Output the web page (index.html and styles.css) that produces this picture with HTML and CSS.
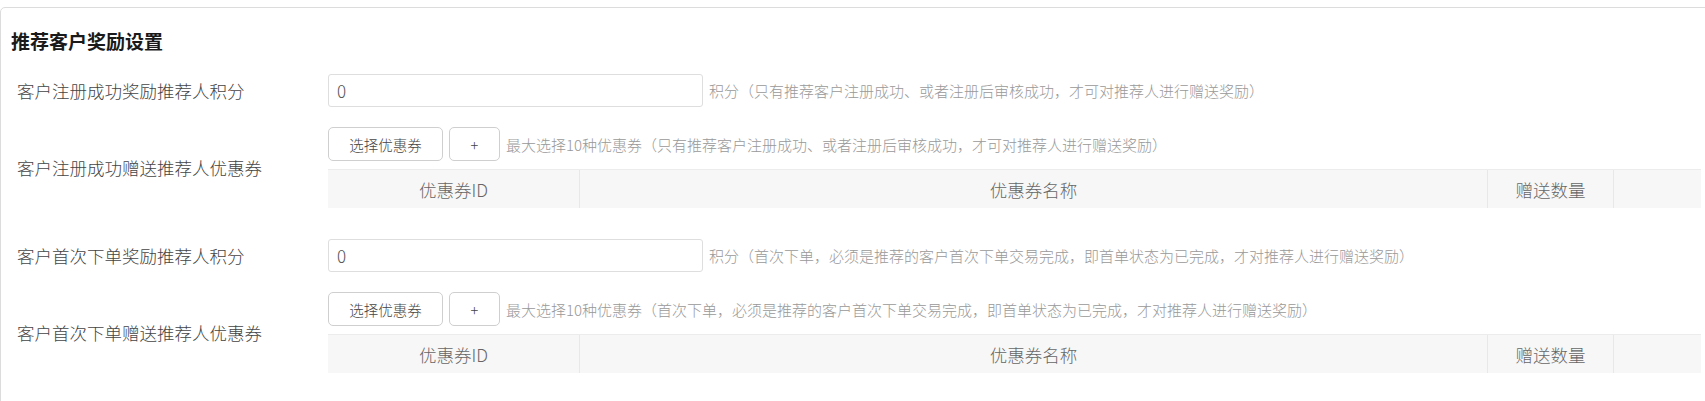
FILE: index.html
```html
<!DOCTYPE html>
<html lang="zh-CN">
<head>
    <meta charset="UTF-8">
    <title>推荐客户奖励设置</title>
    <link rel="stylesheet" href="styles.css">
</head>
<body>
    <div class="panel">
        <h3 class="panel-title">推荐客户奖励设置</h3>

        <div class="form-row">
            <label class="form-label">客户注册成功奖励推荐人积分</label>
            <div class="form-field inline">
                <input type="text" class="text-input" value="0">
                <span class="hint">积分（只有推荐客户注册成功、或者注册后审核成功，才可对推荐人进行赠送奖励）</span>
            </div>
        </div>

        <div class="form-row coupon-row">
            <label class="form-label">客户注册成功赠送推荐人优惠券</label>
            <div class="form-field">
                <div class="inline">
                    <button class="btn">选择优惠券</button>
                    <button class="btn btn-add">+</button>
                    <span class="hint">最大选择10种优惠券（只有推荐客户注册成功、或者注册后审核成功，才可对推荐人进行赠送奖励）</span>
                </div>
                <table class="coupon-table">
                    <thead>
                        <tr>
                            <th class="col-id">优惠券ID</th>
                            <th>优惠券名称</th>
                            <th class="col-num">赠送数量</th>
                            <th class="col-op"></th>
                        </tr>
                    </thead>
                    <tbody></tbody>
                </table>
            </div>
        </div>

        <div class="form-row">
            <label class="form-label">客户首次下单奖励推荐人积分</label>
            <div class="form-field inline">
                <input type="text" class="text-input" value="0">
                <span class="hint">积分（首次下单，必须是推荐的客户首次下单交易完成，即首单状态为已完成，才对推荐人进行赠送奖励）</span>
            </div>
        </div>

        <div class="form-row coupon-row">
            <label class="form-label">客户首次下单赠送推荐人优惠券</label>
            <div class="form-field">
                <div class="inline">
                    <button class="btn">选择优惠券</button>
                    <button class="btn btn-add">+</button>
                    <span class="hint">最大选择10种优惠券（首次下单，必须是推荐的客户首次下单交易完成，即首单状态为已完成，才对推荐人进行赠送奖励）</span>
                </div>
                <table class="coupon-table">
                    <thead>
                        <tr>
                            <th class="col-id">优惠券ID</th>
                            <th>优惠券名称</th>
                            <th class="col-num">赠送数量</th>
                            <th class="col-op"></th>
                        </tr>
                    </thead>
                    <tbody></tbody>
                </table>
            </div>
        </div>
    </div>
</body>
</html>
```

FILE: styles.css
```css
body {
    margin: 0;
    padding-top: 7px;
    overflow: hidden;
    background-color: #fff;
    font-family: "Noto Sans CJK SC", "Noto Sans", sans-serif;
    color: #333;
}
.panel {
    width: 1717px;
    box-sizing: border-box;
    border: 1px solid #dcdcdc;
    border-radius: 5px;
    padding: 19px 15px 18px 10px;
}
.panel-title {
    margin: 0 0 19px;
    font-size: 19px;
    line-height: 28px;
    font-weight: bold;
    color: #1a1a1a;
}
.form-row {
    display: flex;
    align-items: center;
    margin-bottom: 20px;
}
.form-row:last-child {
    margin-bottom: 0;
}
.coupon-row {
    padding-bottom: 26px;
    margin-bottom: 5px;
}
.form-label {
    width: 317px;
    flex-shrink: 0;
    box-sizing: border-box;
    padding-left: 6px;
    font-size: 17.5px;
    font-weight: 300;
    color: #444;
}
.form-field {
    flex: 1;
}
.inline {
    display: flex;
    align-items: center;
    gap: 6px;
}
.text-input {
    width: 375px;
    height: 33px;
    box-sizing: border-box;
    border: 1px solid #dedede;
    border-radius: 3px;
    padding: 0 8px;
    font-family: inherit;
    font-size: 17px;
    font-weight: 300;
    color: #555;
    outline: none;
}
.hint {
    font-size: 15px;
    font-weight: 300;
    color: #999;
}
.btn {
    height: 34px;
    width: 115px;
    box-sizing: border-box;
    border: 1px solid #cfcfcf;
    border-radius: 5px;
    background-color: #fff;
    font-family: inherit;
    font-size: 14.5px;
    font-weight: 300;
    color: #444;
    padding: 0;
}
.btn-add {
    width: 51px;
}
.coupon-table {
    width: 100%;
    margin-top: 8px;
    border-collapse: collapse;
    table-layout: fixed;
}
.coupon-table th {
    height: 38px;
    padding: 0;
    background-color: #f7f7f7;
    border-top: 1px solid #ececec;
    border-left: 1px solid #e8e8e8;
    font-weight: 300;
    font-size: 17.5px;
    color: #666;
    text-align: center;
}
.coupon-table th:first-child {
    border-left: none;
}
.col-id {
    width: 251px;
}
.col-num {
    width: 125px;
}
.col-op {
    width: 87px;
}
```
